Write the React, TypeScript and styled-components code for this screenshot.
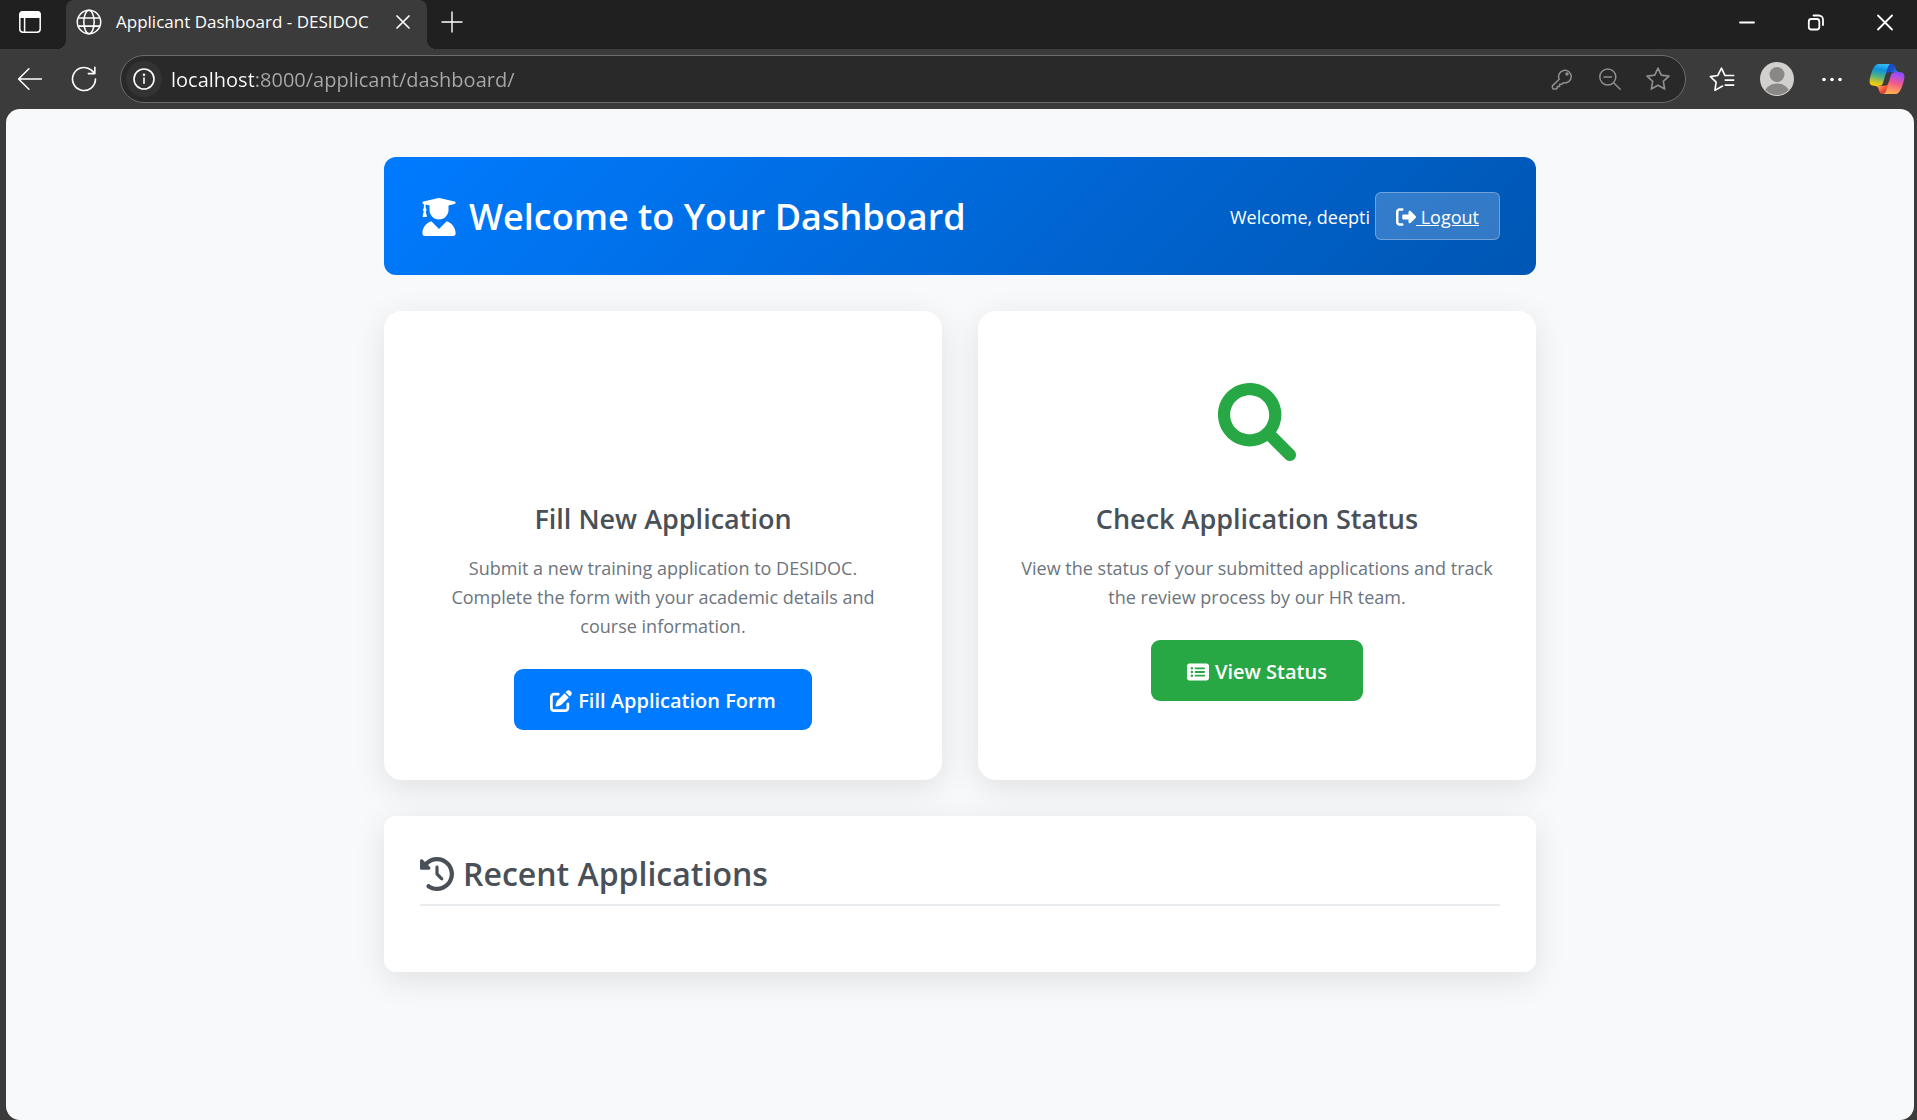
import React from "react";
import styled, { createGlobalStyle } from "styled-components";
import {
  FaRightFromBracket,
  FaPenToSquare,
  FaRectangleList,
  FaClockRotateLeft,
} from "react-icons/fa6";

const GlobalStyle = createGlobalStyle`
  *, *::before, *::after { box-sizing: border-box; }
  html, body { margin: 0; background: #3b3b3b; }
  body, button, input {
    font-family: "Open Sans", "Noto Sans", sans-serif;
  }
`;

const Window = styled.div`
  min-height: 100vh;
  display: flex;
  flex-direction: column;
  background: #3b3b3b;
`;

/* ---- Tab strip ---- */

const TabStrip = styled.header`
  height: 49px;
  display: flex;
  align-items: stretch;
  background: #202020;
  color: #fff;
`;

const StripButton = styled.button<{ $width: number }>`
  width: ${(p) => p.$width}px;
  height: 44px;
  padding: 0;
  border: 0;
  background: none;
  color: inherit;
  display: flex;
  align-items: center;
  justify-content: center;
`;

const Tab = styled.div`
  position: relative;
  width: 361px;
  margin-left: 6px;
  padding: 0 12px 5px 10px;
  display: flex;
  align-items: center;
  gap: 14px;
  border-radius: 8px 8px 0 0;
  background: #3b3b3b;

  &::before,
  &::after {
    content: "";
    position: absolute;
    bottom: 0;
    width: 9px;
    height: 9px;
  }
  &::before {
    left: -9px;
    background: radial-gradient(circle at 0 0, #202020 9px, #3b3b3b 9px);
  }
  &::after {
    right: -9px;
    background: radial-gradient(circle at 100% 0, #202020 9px, #3b3b3b 9px);
  }
`;

const TabTitle = styled.span`
  flex: 1;
  font-size: 17px;
  line-height: 24px;
  white-space: nowrap;
`;

const WindowControls = styled.div`
  margin-left: auto;
  display: flex;
  gap: 5px;
`;

/* ---- Toolbar ---- */

const Toolbar = styled.nav`
  height: 60px;
  padding: 0 8px;
  display: flex;
  align-items: center;
  gap: 14px;
  color: #fff;
`;

const ToolGroup = styled.div<{ $gap: number }>`
  display: flex;
  align-items: center;
  gap: ${(p) => p.$gap}px;
`;

const ToolButton = styled.button<{ $size?: number; $filled?: boolean }>`
  width: ${(p) => p.$size ?? 44}px;
  height: ${(p) => p.$size ?? 44}px;
  flex: none;
  padding: 0;
  border: 0;
  border-radius: 50%;
  background: ${(p) => (p.$filled ? "#333" : "none")};
  color: inherit;
  display: flex;
  align-items: center;
  justify-content: center;
`;

const AddressBar = styled.div`
  flex: 1;
  height: 48px;
  padding: 0 9px 0 5px;
  display: flex;
  align-items: center;
  gap: 9px;
  border: 1px solid #6c6c6c;
  border-radius: 24px;
  background: #292929;
`;

const AddressInput = styled.input`
  flex: 1;
  min-width: 0;
  padding: 2px 0 0;
  border: 0;
  outline: 0;
  font-size: 20px;
  line-height: 28px;
  background: linear-gradient(90deg, #fff 83px, #a9a9a9 83px);
  -webkit-background-clip: text;
  background-clip: text;
  -webkit-text-fill-color: transparent;
`;

const AddressActions = styled.div`
  display: flex;
  gap: 12px;
  color: #8f8f8f;
`;

/* ---- Page ---- */

const Viewport = styled.main`
  flex: 1;
  margin: 0 3px 0 6px;
  padding: 48px;
  border-radius: 14px;
  background: #f8f9fb;
`;

const Container = styled.div`
  max-width: 1152px;
  margin: 0 auto;
  display: flex;
  flex-direction: column;
  gap: 36px;
`;

const Banner = styled.section`
  padding: 36px;
  display: flex;
  align-items: center;
  justify-content: space-between;
  border-radius: 12px;
  background: linear-gradient(135deg, #007bff, #0056b3);
  color: #fff;
`;

const BannerTitle = styled.h1`
  margin: 0;
  padding-top: 2px;
  display: flex;
  align-items: center;
  gap: 11px;
  font-size: 36px;
  line-height: 44px;
  font-weight: 600;
`;

const Account = styled.div`
  height: 46px;
  display: flex;
  align-items: center;
  gap: 5px;
  font-size: 18px;
  line-height: 28px;
`;

const Greeting = styled.span`
  padding-top: 2px;
`;

const LogoutLink = styled.a`
  padding: 10px 20px 8px;
  display: flex;
  align-items: center;
  border: 1px solid rgba(255, 255, 255, 0.3);
  border-radius: 6px;
  background: rgba(255, 255, 255, 0.2);
  color: #fff;
  text-decoration: underline;
  white-space: pre;
`;

const CardGrid = styled.div`
  display: grid;
  grid-template-columns: repeat(auto-fit, minmax(420px, 1fr));
  gap: 36px;
`;

const Card = styled.article`
  padding: 48px 40px 50px;
  display: flex;
  flex-direction: column;
  align-items: center;
  border-radius: 18px;
  background: #fff;
  box-shadow: 0 8px 32px rgba(0, 0, 0, 0.1);
  text-align: center;
`;

const CardIcon = styled.div`
  height: 125px;
  display: flex;
  align-items: center;
  color: #28a745;
`;

const CardTitle = styled.h2`
  margin: 17px 0 18px;
  font-size: 27px;
  line-height: 35px;
  font-weight: 600;
  color: #495057;
`;

const CardText = styled.p`
  margin: 0 0 28px;
  font-size: 18px;
  line-height: 29px;
  color: #6c757d;
`;

const ActionLink = styled.a<{ $color: string }>`
  padding: 17px 36px 15px;
  display: flex;
  align-items: center;
  gap: 6px;
  border-radius: 9px;
  background: ${(p) => p.$color};
  color: #fff;
  font-size: 20px;
  line-height: 29px;
  font-weight: 600;
  text-decoration: none;
`;

const Recent = styled.section`
  padding: 36px 36px 66px;
  border-radius: 12px;
  background: #fff;
  box-shadow: 0 8px 32px rgba(0, 0, 0, 0.1);
`;

const RecentTitle = styled.h2`
  margin: 0;
  padding: 2px 0 10px;
  display: flex;
  align-items: center;
  gap: 9px;
  border-bottom: 2px solid #e9ecef;
  font-size: 32px;
  line-height: 40px;
  font-weight: 600;
  color: #495057;
`;

/* ---- Drawings ---- */

type LineProps = { size: number; width?: number; children: React.ReactNode };

/* Outline icon on a 24-unit grid */
const Line = ({ size, width = 1.5, children }: LineProps) => (
  <svg
    width={size}
    height={size}
    viewBox="0 0 24 24"
    fill="none"
    stroke="currentColor"
    strokeWidth={width}
    strokeLinecap="round"
    strokeLinejoin="round"
    aria-hidden="true"
  >
    {children}
  </svg>
);

/* Solid icon on a 512-unit grid */
const Solid = ({ size, d }: { size: number; d: string }) => (
  <svg width={size} height={size} viewBox="0 0 512 512" fill="currentColor" aria-hidden="true">
    <path d={d} />
  </svg>
);

const GRADUATE =
  "M45.63 79.75L52 81.25v58.5C45 143.9 40 151.3 40 160c0 8.375 4.625 15.38 11.12 19.75L35.5 242C33.75 248.9 37.63 256 43.13 256h41.75c5.5 0 9.375-7.125 7.625-14L76.88 179.8C83.38 175.4 88 168.4 88 160c0-8.75-5-16.12-12-20.25V87.13L128 99.63V160c0 70.75 57.25 128 128 128s128-57.25 128-128V99.62l82.25-19.87c18.25-4.375 18.25-27 0-31.5l-190.4-46c-13-3-26.62-3-39.63 0l-190.6 46C27.5 52.63 27.5 75.38 45.63 79.75zM359.2 312.8L256 416 152.8 312.8C82.87 335.1 32 400 32 477.3 32 496.5 47.53 512 66.67 512h378.7C464.5 512 480 496.5 480 477.3 480 400 429.1 335.1 359.2 312.8z";

const SEARCH =
  "M500.3 443.7l-119.7-119.7c27.22-40.41 40.65-90.9 33.46-144.7C401.8 87.79 326.8 13.32 235.2 1.723 99.01-15.51-15.51 99.01 1.724 235.2c11.6 91.64 86.08 166.7 177.6 178.9 53.8 7.189 104.3-6.236 144.7-33.46l119.7 119.7c15.62 15.62 40.95 15.62 56.57 0C515.9 484.7 515.9 459.3 500.3 443.7zM80 208c0-70.58 57.42-128 128-128s128 57.42 128 128-57.42 128-128 128S80 278.6 80 208z";

const Globe = () => (
  <Line size={26} width={1.4}>
    <circle cx="12" cy="12" r="10.8" />
    <ellipse cx="12" cy="12" rx="4.8" ry="10.8" />
    <path d="M2.4 8.2h19.2M2.4 15.8h19.2" />
  </Line>
);

const TabActions = () => (
  <Line size={24} width={1.5}>
    <rect x="1.8" y="1.8" width="20.4" height="20.4" rx="3.2" />
    <path d="M1.8 7.2V5a3.2 3.2 0 0 1 3.2-3.2h14A3.2 3.2 0 0 1 22.2 5v2.2z" fill="currentColor" />
    <path d="M6.6 7.2v15" />
  </Line>
);

const Profile = () => (
  <svg width="34" height="34" viewBox="0 0 34 34" aria-hidden="true">
    <defs>
      <clipPath id="profile-disc">
        <circle cx="17" cy="17" r="16" />
      </clipPath>
    </defs>
    <circle cx="17" cy="17" r="17" fill="#d2d0ce" />
    <g clipPath="url(#profile-disc)" fill="#8a8886">
      <circle cx="17" cy="12.5" r="7.5" />
      <ellipse cx="17" cy="31.5" rx="12.5" ry="10" />
    </g>
  </svg>
);

const Copilot = () => (
  <svg width="38" height="36" viewBox="0 0 48 48" preserveAspectRatio="none" aria-hidden="true">
    <defs>
      <linearGradient id="cp-top" x1="24" y1="6" x2="38" y2="18" gradientUnits="userSpaceOnUse">
        <stop offset="0" stopColor="#1b44b1" />
        <stop offset="0.5" stopColor="#2052cb" />
        <stop offset="1" stopColor="#2a9bee" />
      </linearGradient>
      <linearGradient id="cp-bottom" x1="12" y1="32" x2="22" y2="44" gradientUnits="userSpaceOnUse">
        <stop offset="0" stopColor="#ffb657" />
        <stop offset="0.5" stopColor="#ff5f3d" />
        <stop offset="1" stopColor="#c02b3c" />
      </linearGradient>
      <linearGradient id="cp-left" x1="17" y1="4" x2="11" y2="33" gradientUnits="userSpaceOnUse">
        <stop offset="0" stopColor="#35b8f5" />
        <stop offset="0.25" stopColor="#0d91e1" />
        <stop offset="0.55" stopColor="#47b08b" />
        <stop offset="0.85" stopColor="#d0c526" />
        <stop offset="1" stopColor="#ffd000" />
      </linearGradient>
      <linearGradient id="cp-right" x1="38" y1="15" x2="30" y2="44" gradientUnits="userSpaceOnUse">
        <stop offset="0" stopColor="#8c48ff" />
        <stop offset="0.15" stopColor="#a94df0" />
        <stop offset="0.5" stopColor="#f2598a" />
        <stop offset="0.85" stopColor="#ff9a5f" />
        <stop offset="1" stopColor="#ffb152" />
      </linearGradient>
    </defs>
    <path
      fill="url(#cp-top)"
      d="M34.14 7.33A4.63 4.63 0 0 0 29.7 4h-1.35a4.63 4.63 0 0 0-4.55 3.79L21.48 20.4l.58-1.96a4.63 4.63 0 0 1 4.44-3.33h7.85l3.3 1.28 3.17-1.28h-.93a4.63 4.63 0 0 1-4.44-3.32z"
    />
    <path
      fill="url(#cp-bottom)"
      d="M14.33 40.66A4.63 4.63 0 0 0 18.78 44h2.87a4.63 4.63 0 0 0 4.63-4.51l.31-12.16-.65 2.23a4.63 4.63 0 0 1-4.45 3.33h-7.92l-2.82-1.53-3.06 1.53h.92a4.63 4.63 0 0 1 4.44 3.34z"
    />
    <path
      fill="url(#cp-left)"
      d="M29.5 4H13.46C8.88 4 6.13 10.06 4.3 16.11 2.12 23.29-.72 32.89 7.5 32.89h6.93a4.63 4.63 0 0 0 4.45-3.36 2078 2078 0 0 1 4.97-17.16c.85-2.84 1.55-5.28 2.62-6.8C27.08 4.71 28.09 4 29.5 4z"
    />
    <path
      fill="url(#cp-right)"
      d="M18.5 44h16.04c4.58 0 7.33-6.06 9.16-12.11 2.17-7.18 5.02-16.78-3.2-16.78h-6.93a4.63 4.63 0 0 0-4.46 3.36 2084 2084 0 0 1-4.97 17.16c-.84 2.84-1.54 5.29-2.62 6.81-.6.85-1.61 1.56-3.02 1.56z"
    />
  </svg>
);

const STAR = "M12 1.9l3 6.5 7.1.9-5.2 4.9 1.3 7.1-6.2-3.5-6.2 3.5 1.3-7.1L1.9 9.3l7.1-.9z";

export default function App() {
  return (
    <Window>
      <GlobalStyle />

      <TabStrip>
        <StripButton $width={60} aria-label="Tab actions menu">
          <TabActions />
        </StripButton>
        <Tab>
          <Globe />
          <TabTitle>Applicant Dashboard - DESIDOC</TabTitle>
          <StripButton $width={24} aria-label="Close tab">
            <Line size={24} width={1.7}>
              <path d="M6 6l12 12M18 6L6 18" />
            </Line>
          </StripButton>
        </Tab>
        <StripButton $width={50} aria-label="New tab">
          <Line size={24} width={1.4}>
            <path d="M12 2v20M2 12h20" />
          </Line>
        </StripButton>
        <WindowControls>
          <StripButton $width={64} aria-label="Minimize">
            <Line size={24} width={1.8}>
              <path d="M5 12.5h14" />
            </Line>
          </StripButton>
          <StripButton $width={64} aria-label="Restore">
            <Line size={24} width={1.8}>
              <rect x="4.8" y="9" width="10.5" height="10.5" rx="2.5" />
              <path d="M9.5 5.5h5.2a4.3 4.3 0 0 1 4.3 4.3v5.2" />
            </Line>
          </StripButton>
          <StripButton $width={64} aria-label="Close">
            <Line size={24} width={1.8}>
              <path d="M5 5.5l14 14M19 5.5l-14 14" />
            </Line>
          </StripButton>
        </WindowControls>
      </TabStrip>

      <Toolbar>
        <ToolGroup $gap={10}>
          <ToolButton aria-label="Back">
            <Line size={26} width={1.4}>
              <path d="M22.5 12H1.8M11 2.5L1.5 12l9.5 9.5" />
            </Line>
          </ToolButton>
          <ToolButton aria-label="Refresh">
            <Line size={26} width={1.5}>
              <path d="M22.6 12A10.6 10.6 0 1 1 18.8 3.9L22 6.8M22 1.2v5.8h-6" />
            </Line>
          </ToolButton>
        </ToolGroup>

        <AddressBar>
          <ToolButton $size={36} $filled aria-label="View site information">
            <Line size={24} width={1.6}>
              <circle cx="12" cy="12" r="10" />
              <path d="M12 11v5.3" />
              <circle cx="12" cy="7.8" r="0.5" fill="currentColor" />
            </Line>
          </ToolButton>
          <AddressInput
            aria-label="Address and search bar"
            defaultValue="localhost:8000/applicant/dashboard/"
          />
          <AddressActions>
            <ToolButton $size={36} aria-label="Passwords">
              <Line size={24} width={1.5}>
                <path d="M9.2 12.3A6.3 6.3 0 1 1 13.3 15.7l-1.5 1.5H9.6v2.2H7.3v1.5l-1 1H3.6a1.2 1.2 0 0 1-1.2-1.2v-1.8z" />
                <circle cx="17" cy="7" r="1" />
              </Line>
            </ToolButton>
            <ToolButton $size={36} aria-label="Zoom">
              <Line size={24} width={1.5}>
                <circle cx="9.8" cy="10" r="8" />
                <path d="M6 10h7.6M15.6 15.8l6.6 6.4" />
              </Line>
            </ToolButton>
            <ToolButton $size={36} aria-label="Add this page to favorites">
              <Line size={26} width={1.5}>
                <path d={STAR} />
              </Line>
            </ToolButton>
          </AddressActions>
        </AddressBar>

        <ToolGroup $gap={11}>
          <ToolButton aria-label="Favorites">
            <Line size={26} width={1.5}>
              <path d="M12.5 18.5L5.5 22.5l1.1-7.6L1.3 9.8l6.7-1L11.5 2l3.3 6.8h8M15 13h7.8M15 17.6h7.8" />
            </Line>
          </ToolButton>
          <ToolButton aria-label="Profile">
            <Profile />
          </ToolButton>
          <ToolButton aria-label="Settings and more">
            <svg width="24" height="24" viewBox="0 0 24 24" fill="currentColor" aria-hidden="true">
              <circle cx="4" cy="12.5" r="1.8" />
              <circle cx="12" cy="12.5" r="1.8" />
              <circle cx="20" cy="12.5" r="1.8" />
            </svg>
          </ToolButton>
          <ToolButton aria-label="Copilot">
            <Copilot />
          </ToolButton>
        </ToolGroup>
      </Toolbar>

      <Viewport>
        <Container>
          <Banner>
            <BannerTitle>
              <Solid size={38} d={GRADUATE} />
              Welcome to Your Dashboard
            </BannerTitle>
            <Account>
              <Greeting>Welcome, deepti</Greeting>
              <LogoutLink href="#logout">
                <FaRightFromBracket size={20} />
                {" Logout"}
              </LogoutLink>
            </Account>
          </Banner>

          <CardGrid>
            <Card>
              <CardIcon />
              <CardTitle>Fill New Application</CardTitle>
              <CardText>
                Submit a new training application to DESIDOC.
                <br />
                Complete the form with your academic details and course information.
              </CardText>
              <ActionLink href="#apply" $color="#007bff">
                <FaPenToSquare size={22} />
                Fill Application Form
              </ActionLink>
            </Card>
            <Card>
              <CardIcon>
                <Solid size={78} d={SEARCH} />
              </CardIcon>
              <CardTitle>Check Application Status</CardTitle>
              <CardText>
                View the status of your submitted applications and track the review process by our
                HR team.
              </CardText>
              <ActionLink href="#status" $color="#28a745">
                <FaRectangleList size={22} />
                View Status
              </ActionLink>
            </Card>
          </CardGrid>

          <Recent>
            <RecentTitle>
              <FaClockRotateLeft size={34} />
              Recent Applications
            </RecentTitle>
          </Recent>
        </Container>
      </Viewport>
    </Window>
  );
}
